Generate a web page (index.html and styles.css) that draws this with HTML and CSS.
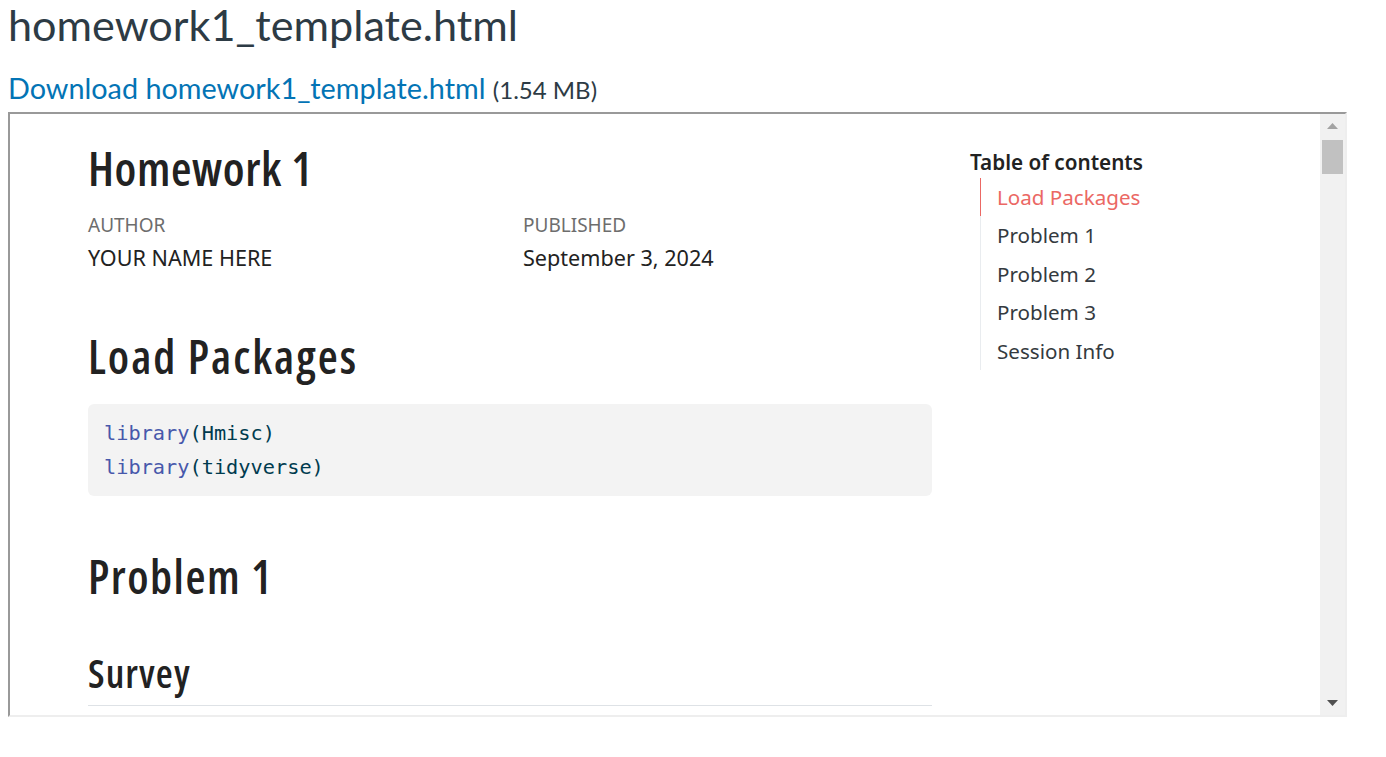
FILE: index.html
```html
<!DOCTYPE html>
<html lang="en">
<head>
<meta charset="utf-8">
<title>homework1_template.html</title>
<link rel="stylesheet" href="styles.css">
</head>
<body>
<div class="page">
  <h1 class="file-title">homework1_template.html</h1>
  <p class="download"><a class="download-link" href="#">Download homework1_template.html</a> <span class="size">(1.54 MB)</span></p>
  <div class="frame">
    <div class="doc">
      <main class="content">
        <h1 class="doc-title">Homework 1</h1>
        <div class="meta">
          <div class="meta-item">
            <div class="meta-label">Author</div>
            <div class="meta-value">YOUR NAME HERE</div>
          </div>
          <div class="meta-item">
            <div class="meta-label">Published</div>
            <div class="meta-value">September 3, 2024</div>
          </div>
        </div>
        <h2 class="h2 h2-first">Load Packages</h2>
        <pre class="code"><code><span class="fn">library</span>(Hmisc)
<span class="fn">library</span>(tidyverse)</code></pre>
        <h2 class="h2 h2-next">Problem 1</h2>
        <h3 class="h3">Survey</h3>
      </main>
      <nav class="toc">
        <div class="toc-title">Table of contents</div>
        <ul class="toc-list">
          <li class="toc-item active">Load Packages</li>
          <li class="toc-item">Problem 1</li>
          <li class="toc-item">Problem 2</li>
          <li class="toc-item">Problem 3</li>
          <li class="toc-item">Session Info</li>
        </ul>
      </nav>
    </div>
    <div class="scrollbar">
      <div class="arrow arrow-up"><svg width="11" height="6" viewBox="0 0 11 6"><polygon points="5.5,0 11,6 0,6" fill="#a3a3a3"/></svg></div>
      <div class="thumb"></div>
      <div class="track-space"></div>
      <div class="arrow arrow-down"><svg width="11" height="6" viewBox="0 0 11 6"><polygon points="0,0 11,0 5.5,6" fill="#505050"/></svg></div>
    </div>
  </div>
</div>
</body>
</html>
```

FILE: styles.css
```css
html, body {
  margin: 0;
  padding: 0;
  background: #ffffff;
}

.page {
  padding: 0 8px;
  font-family: Lato, "Liberation Sans", sans-serif;
  color: #2d3b45;
}

.file-title {
  margin: 0;
  font-family: Lato, sans-serif;
  font-weight: 400;
  font-size: 43.2px;
  line-height: 48px;
  color: #2d3b45;
}

.download {
  margin: 22px 0 0;
  font-size: 28.8px;
  line-height: 36px;
  height: 36px;
}

.download-link {
  color: #0374b5;
  text-decoration: none;
}

.size {
  font-size: 24px;
  color: #2d3b45;
}

.frame {
  margin-top: 6px;
  width: 1335px;
  height: 601px;
  border: 2px solid;
  border-color: #999999 #eeeeee #eeeeee #999999;
  display: flex;
  overflow: hidden;
  background: #ffffff;
}

.doc {
  width: 1310px;
  height: 601px;
  overflow: hidden;
  display: flex;
  padding: 26px 0 0 78px;
  box-sizing: border-box;
  font-family: "Noto Sans", "Open Sans", sans-serif;
  color: #222222;
}

.content {
  width: 844px;
  flex: none;
}

.doc-title,
.h2,
.h3 {
  font-family: "Open Sans", sans-serif;
  font-stretch: 75%;
  font-weight: 600;
  color: #222222;
}

.doc-title {
  margin: 0;
  font-size: 47px;
  line-height: 56px;
  letter-spacing: 0.6px;
}

.meta {
  display: grid;
  grid-template-columns: 435px 1fr;
  margin-top: 15px;
}

.meta-label {
  font-size: 19px;
  line-height: 28px;
  text-transform: uppercase;
  color: #6d6d6d;
}

.meta-value {
  margin-top: 3px;
  font-size: 21.6px;
  line-height: 32px;
  color: #222222;
}

.h2 {
  margin: 0;
  font-size: 46px;
  line-height: 55px;
  letter-spacing: 1.5px;
}

.h2-first {
  margin-top: 55px;
  letter-spacing: 2px;
}

.h2-next {
  margin-top: 53px;
}

.h3 {
  margin: 45px 0 0;
  padding-bottom: 9px;
  border-bottom: 1px solid #dee2e6;
  font-size: 39px;
  line-height: 47px;
  letter-spacing: 1.1px;
}

.code {
  margin: 20px 0 0;
  padding: 13px 16px 12px;
  background: #f3f3f3;
  border-radius: 6px;
  font-family: "DejaVu Sans Mono", "Liberation Mono", monospace;
  font-size: 20.3px;
  line-height: 33.5px;
  color: #003b4f;
}

.code code {
  font-family: inherit;
}

.fn {
  color: #4758ab;
}

.toc {
  margin-left: 38px;
  padding-top: 9px;
  width: 300px;
  flex: none;
}

.toc-title {
  font-size: 20.7px;
  font-weight: 600;
  line-height: 26px;
  color: #222222;
}

.toc-list {
  list-style: none;
  margin: 3px 0 0 10px;
  padding: 0;
  border-left: 1px solid #e9ecef;
}

.toc-item {
  margin-left: -1px;
  padding-left: 16px;
  height: 38.4px;
  line-height: 38px;
  font-size: 20.6px;
  color: #343a40;
  border-left: 1px solid transparent;
}

.toc-item.active {
  color: #eb6864;
  border-left-color: #eb6864;
}

.scrollbar {
  width: 25px;
  height: 601px;
  background: #f1f1f1;
  display: flex;
  flex-direction: column;
  align-items: center;
  flex: none;
}

.arrow {
  height: 24px;
  width: 25px;
  display: flex;
  align-items: center;
  justify-content: center;
}

.arrow svg {
  display: block;
}

.thumb {
  width: 21px;
  height: 34px;
  margin-top: 2px;
  background: #c1c1c1;
}

.track-space {
  flex: 1;
}
```
